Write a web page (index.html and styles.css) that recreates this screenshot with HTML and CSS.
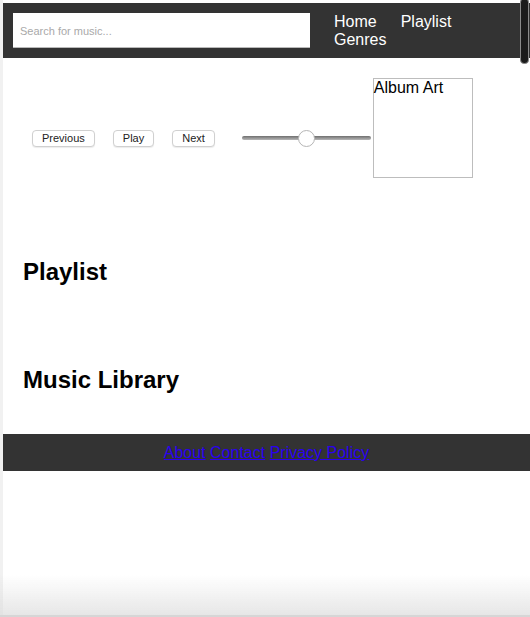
FILE: index.html
```html
<!DOCTYPE html>
<html lang="en">
<head>
<meta charset="utf-8">
<title>Music Player</title>
<link rel="stylesheet" href="styles.css">
</head>
<body>
<div class="frame">
  <header class="topbar">
    <input class="search" type="text" placeholder="Search for music...">
    <nav class="nav">
      <a href="#">Home</a>
      <a href="#">Playlist</a>
      <a href="#">Genres</a>
    </nav>
  </header>

  <section class="section player">
    <div class="buttons">
      <button class="btn">Previous</button>
      <button class="btn">Play</button>
      <button class="btn">Next</button>
    </div>
    <input class="volume" type="range" min="0" max="100" value="50">
    <div class="album-art">Album Art</div>
  </section>

  <section class="section">
    <h2 class="title">Playlist</h2>
  </section>

  <section class="section">
    <h2 class="title">Music Library</h2>
  </section>

  <footer class="footer">
    <a href="#">About</a> <a href="#">Contact</a> <a href="#">Privacy Policy</a>
  </footer>
</div>
<div class="scroll-thumb"></div>
<div class="window-shade"></div>
</body>
</html>
```

FILE: styles.css
```css
html, body {
  margin: 0;
  padding: 0;
  background: #ffffff;
  font-family: "Liberation Sans", Arial, Helvetica, sans-serif;
}

.frame {
  border-left: 3px solid #f1f1f1;
  padding-top: 3px;
  min-height: 614px;
}

.topbar {
  display: flex;
  align-items: center;
  background: #333333;
  height: 55px;
  padding: 0 10px;
  box-sizing: border-box;
}

.search {
  width: 297px;
  height: 35px;
  box-sizing: border-box;
  border: none;
  box-shadow: inset 0 -1px 0 #b9b9b9;
  padding: 0 7px;
  font-family: "Liberation Sans", Arial, sans-serif;
  font-size: 11px;
  color: #333;
  background: #fff;
  outline: none;
}

.search::placeholder {
  color: #a9a9a9;
}

.nav {
  flex: 1;
  display: flex;
  flex-wrap: wrap;
  column-gap: 24px;
  margin-left: 24px;
  padding-right: 12px;
  font-size: 16px;
  line-height: 18px;
}

.nav a {
  color: #ffffff;
  text-decoration: none;
}

.section {
  padding: 20px;
}

.player {
  display: flex;
  align-items: center;
  margin-bottom: 20px;
}

.buttons {
  display: flex;
  margin-top: 20px;
}

.btn {
  margin: 0 9px;
  height: 17px;
  padding: 0 9px;
  font-family: "Liberation Sans", Arial, sans-serif;
  font-size: 11px;
  color: #222;
  background: #ffffff;
  border: 1px solid #d0d0d0;
  border-radius: 4px;
  box-shadow: 0 1px 1px rgba(0, 0, 0, 0.08);
  line-height: 15px;
}

.volume {
  -webkit-appearance: none;
  appearance: none;
  width: 129px;
  height: 16px;
  margin: 20px 2px 0 18px;
  background: transparent;
}

.volume::-webkit-slider-runnable-track {
  height: 4px;
  border-radius: 2px;
  background: linear-gradient(#6f6f6f, #b8b8b8);
}

.volume::-webkit-slider-thumb {
  -webkit-appearance: none;
  width: 17px;
  height: 17px;
  margin-top: -6.5px;
  border-radius: 50%;
  background: #ffffff;
  border: 1px solid #b5b5b5;
  box-sizing: border-box;
}

.album-art {
  width: 100px;
  height: 100px;
  box-sizing: border-box;
  border: 1px solid #bdbdbd;
  font-size: 16px;
  line-height: 18px;
  color: #000;
}

.title {
  margin: 20px 0;
  font-size: 24px;
  font-weight: bold;
  color: #000;
}

.footer {
  background: #333333;
  text-align: center;
  padding: 10px 0 9px;
  font-size: 16px;
  line-height: 18px;
}

.footer a {
  color: #2a00f0;
}

.scroll-thumb {
  position: fixed;
  top: -2px;
  right: 1px;
  width: 7px;
  height: 64px;
  background: #1b1b1b;
  border: 1px solid #8a8a8a;
  border-radius: 4px;
}

.window-shade {
  position: fixed;
  left: 0;
  right: 0;
  bottom: 0;
  height: 40px;
  pointer-events: none;
  background: linear-gradient(rgba(220, 220, 220, 0), rgba(220, 220, 220, 0.7));
  border-bottom: 2px solid #d6d6d6;
}
```
